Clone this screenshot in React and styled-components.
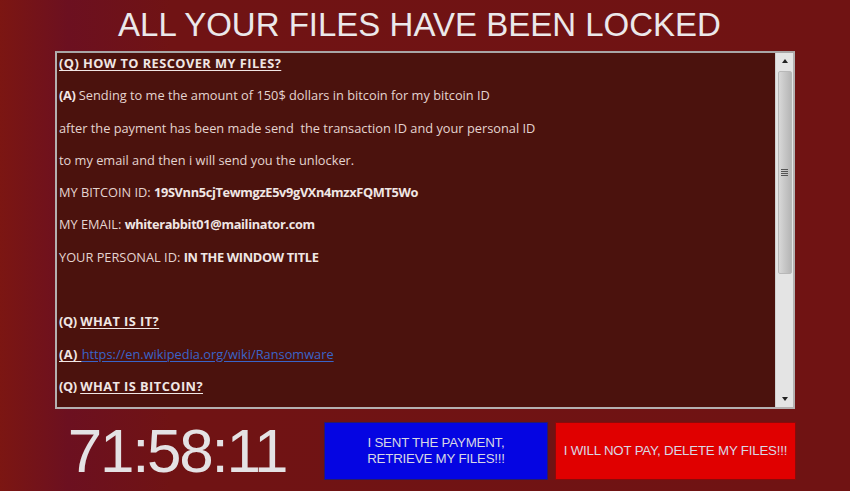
import React from 'react'
import styled, { createGlobalStyle } from 'styled-components'

const Global = createGlobalStyle`
  body {
    margin: 0;
    background: #6e1313;
  }
`

const Screen = styled.div`
  width: 850px;
  height: 491px;
  overflow: hidden;
  display: flex;
  flex-direction: column;
  background: linear-gradient(90deg, #7c1612 0%, #6c1020 8%, #701314 20%, #701313 100%);
  font-family: "Liberation Sans", Arial, sans-serif;
`

const Title = styled.h1`
  margin: 0;
  height: 51px;
  line-height: 50px;
  font-size: 33px;
  font-weight: 400;
  color: #ebe8ea;
  text-align: center;
  padding-right: 11px;
`

const Panel = styled.div`
  margin-left: 55px;
  width: 740px;
  height: 358px;
  box-sizing: border-box;
  border: 2px solid #b4b0b0;
  border-top-color: #a9a6a6;
  background: #4b120d;
  display: flex;
`

const Content = styled.div`
  flex: 1;
  padding: 2px 0 0 2px;
  overflow: hidden;
  font-family: "Open Sans", "Noto Sans", sans-serif;
  font-size: 12.8px;
  color: #e4d4d0;
`

const Line = styled.div`
  line-height: 17px;
  height: 17px;
  margin-bottom: 15.3px;
  white-space: pre;
`

const Blank = styled.div`
  height: 32.3px;
`

const Strong = styled.b`
  font-weight: 700;
  letter-spacing: ${p => (p.$u ? '0.45px' : '-0.35px')};
  color: #f0e6e4;
  text-decoration: ${p => (p.$u ? 'underline' : 'none')};
  text-underline-offset: 2px;
`

const Link = styled.a`
  color: #3a64c8;
  text-decoration: underline;
  text-underline-offset: 2px;
`

const Scrollbar = styled.div`
  width: 17px;
  background: #e4e4e4;
  border-left: 1px solid #cfcfcf;
  display: flex;
  flex-direction: column;
  align-items: center;
`

const Arrow = styled.div`
  height: 16px;
  width: 100%;
  display: flex;
  align-items: center;
  justify-content: center;
  &::after {
    content: '';
    border-left: 3.5px solid transparent;
    border-right: 3.5px solid transparent;
    ${p => (p.$down ? 'border-top: 4px solid #222;' : 'border-bottom: 4px solid #222;')}
  }
`

const Thumb = styled.div`
  margin-top: 2px;
  width: 14px;
  height: 203px;
  box-sizing: border-box;
  border: 1px solid #b8b8b8;
  border-radius: 2px;
  background: linear-gradient(90deg, #d8d8d8 0%, #c6c6c6 50%, #b6b6b6 100%);
  display: flex;
  align-items: center;
  justify-content: center;
`

const Grip = styled.div`
  width: 7px;
  height: 7px;
  background: repeating-linear-gradient(180deg, #555 0px, #555 1px, transparent 1px, transparent 2px);
`

const Track = styled.div`
  flex: 1;
`

const Bottom = styled.div`
  display: flex;
  align-items: center;
  gap: 7px;
  margin: 13px 0 0 55px;
`

const Timer = styled.div`
  width: 262px;
  box-sizing: border-box;
  padding-right: 18px;
  text-align: center;
  font-size: 62px;
  letter-spacing: -2.3px;
  color: #e4e2e4;
  line-height: 58px;
`

const Action = styled.button`
  height: 58px;
  width: ${p => p.$w}px;
  box-sizing: border-box;
  border: 1px solid ${p => p.$border};
  background: ${p => p.$bg};
  color: #d8d8e4;
  font-family: "Liberation Sans", Arial, sans-serif;
  font-size: 13.3px;
  line-height: 16px;
  letter-spacing: -0.2px;
  padding: 0;
`

export default function App() {
  return (
    <Screen>
      <Global />
      <Title>ALL YOUR FILES HAVE BEEN LOCKED</Title>
      <Panel>
        <Content>
          <Line><Strong $u>(Q) HOW TO RESCOVER MY FILES?</Strong></Line>
          <Line><Strong>(A)</Strong> Sending to me the amount of 150$ dollars in bitcoin for my bitcoin ID</Line>
          <Line>after the payment has been made send  the transaction ID and your personal ID</Line>
          <Line>to my email and then i will send you the unlocker.</Line>
          <Line>MY BITCOIN ID: <Strong>19SVnn5cjTewmgzE5v9gVXn4mzxFQMT5Wo</Strong></Line>
          <Line>MY EMAIL: <Strong>whiterabbit01@mailinator.com</Strong></Line>
          <Line>YOUR PERSONAL ID: <Strong>IN THE WINDOW TITLE</Strong></Line>
          <Blank />
          <Line><Strong>(Q)</Strong> <Strong $u>WHAT IS IT?</Strong></Line>
          <Line><Strong $u>(A) </Strong><Link>https://en.wikipedia.org/wiki/Ransomware</Link></Line>
          <Line><Strong>(Q)</Strong> <Strong $u>WHAT IS BITCOIN?</Strong></Line>
        </Content>
        <Scrollbar>
          <Arrow />
          <Thumb><Grip /></Thumb>
          <Track />
          <Arrow $down />
        </Scrollbar>
      </Panel>
      <Bottom>
        <Timer>71:58:11</Timer>
        <Action $w={224} $bg="#0505e2" $border="#2a1a6a">I SENT THE PAYMENT,<br />RETRIEVE MY FILES!!!</Action>
        <Action $w={241} $bg="#e00000" $border="#8a0a0a">I WILL NOT PAY, DELETE MY FILES!!!</Action>
      </Bottom>
    </Screen>
  )
}
